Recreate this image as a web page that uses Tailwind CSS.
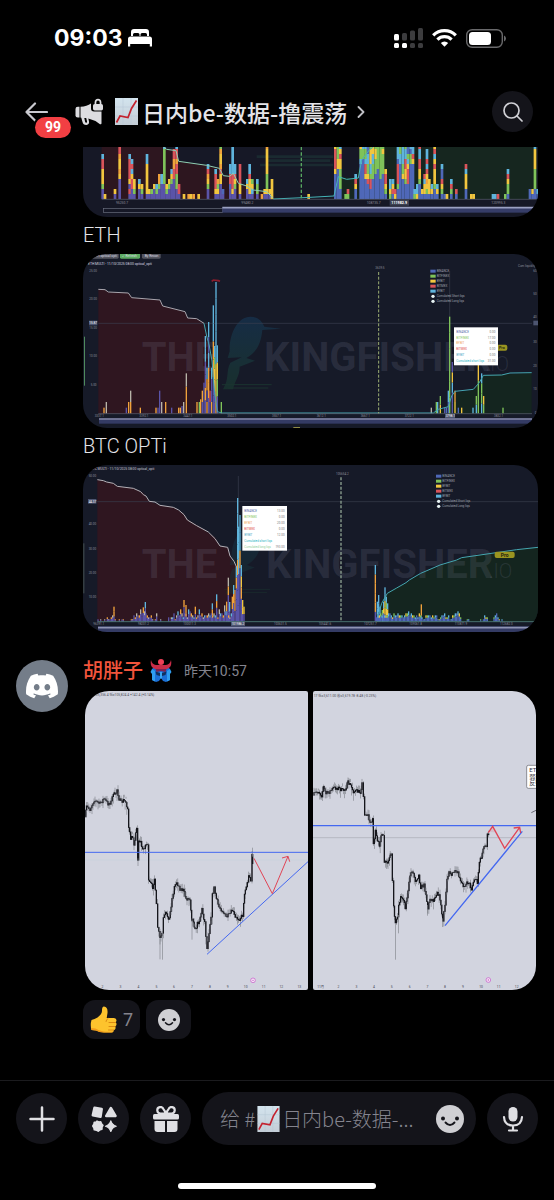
<!DOCTYPE html>
<html lang="zh-CN">
<head>
    <meta charset="UTF-8">
    <meta name="viewport" content="width=device-width, initial-scale=1.0">
    <title>日内be-数据-撸震荡</title>
    <script src="https://cdn.jsdelivr.net/npm/@tailwindcss/browser@4"></script>
</head>
<body class="bg-black text-[#e4e4e8] font-[Roboto,'Noto_Sans_CJK_SC',sans-serif] flex flex-col min-h-screen">
    <!-- Shared symbols -->
    <svg class="absolute w-0 h-0" aria-hidden="true">
        <defs>
            <linearGradient id="paper" x1="0" y1="0" x2="0" y2="1">
                <stop offset="0" stop-color="#d3e4ee"/>
                <stop offset="1" stop-color="#c3cdd6"/>
            </linearGradient>
            <linearGradient id="birdFill" x1="0" y1="0" x2="0" y2="1">
                <stop offset="0" stop-color="#173552"/>
                <stop offset="1" stop-color="#1a3a30"/>
            </linearGradient>
            <symbol id="chartEmoji" viewBox="0 0 23 27">
                <rect width="23" height="27" fill="url(#paper)"/>
                <path d="M0 9h23M0 18h23M8 0v27M16 0v27" stroke="#b4c6d4" stroke-width=".5"/>
                <path d="M1.500 24.500 5 18l8 1.500 3.500-9L21.500 2.500" fill="none" stroke="#c4222e" stroke-width="1.700"/>
            </symbol>
            <symbol id="smile" viewBox="0 0 28 28">
                <circle cx="14" cy="14" r="14" fill="#cfcfd3"/>
                <circle cx="7" cy="13.500" r="2" fill="#14141a"/>
                <circle cx="21" cy="13.500" r="2" fill="#14141a"/>
                <path d="M9.500 17.500q4.500 5 9 0" fill="none" stroke="#14141a" stroke-width="1.900" stroke-linecap="round"/>
            </symbol>
            <symbol id="bird" viewBox="0 0 180 230">
                <path d="M24 106C22 50 50 2 86 2c20 0 34 10 42 30l50 6-56 4c-4 40-16 66-48 84l26 8-46 18c0 30-14 40-20 68H4c20-34 8-54 22-80l34-16-42 2Z" fill="url(#birdFill)"/>
                <path d="M0 206h150M20 216h120" stroke="#1d3f33" stroke-width="3"/>
            </symbol>
        </defs>
    </svg>

    <header class="h-[147px] shrink-0">
        <!-- Status bar -->
        <div class="h-[76px] pl-[54px] pr-12 flex items-center justify-between">
            <div class="flex items-center gap-1.5">
                <span class="text-[23px] leading-7 font-bold text-white font-[Inter,sans-serif]">09:03</span>
                <svg class="w-6 h-[18px]" viewBox="0 0 24 18" fill="#fff">
                    <path d="M3 7V3a3 3 0 0 1 3-3h12a3 3 0 0 1 3 3v4h-2V5.500a1.500 1.500 0 0 0-1.500-1.500H14a1.500 1.500 0 0 0-1.500 1.500V7h-1V5.500A1.500 1.500 0 0 0 10 4H6.500A1.500 1.500 0 0 0 5 5.500V7Z"/>
                    <path d="M2.500 7.500h19A2.500 2.500 0 0 1 24 10v7.500h-2.200V15H2.200v2.500H0V10a2.500 2.500 0 0 1 2.500-2.500Z"/>
                </svg>
            </div>
            <div class="flex items-center gap-[9px]">
                <svg class="w-[29px] h-5" viewBox="0 0 29 20">
                    <g fill="#fff">
                        <rect y="6" width="5" height="6.500" rx="1.500"/>
                        <rect y="15" width="5" height="5" rx="1.500"/>
                        <rect x="8" y="15" width="5" height="5" rx="1.500"/>
                    </g>
                    <g fill="#3c3c3e">
                        <rect x="8" y="5" width="5" height="7.500" rx="1.500"/>
                        <rect x="16" y="2.500" width="5" height="10" rx="1.500"/>
                        <rect x="24" width="5" height="12.500" rx="1.500"/>
                        <rect x="16" y="15" width="5" height="5" rx="1.500"/>
                        <rect x="24" y="15" width="5" height="5" rx="1.500"/>
                    </g>
                </svg>
                <svg class="w-[25px] h-[18px]" viewBox="0 0 25 18" fill="none" stroke="#fff" stroke-width="3.200">
                    <path d="M1.200 6.300a16 16 0 0 1 22.600 0"/>
                    <path d="M5.400 10.600a10 10 0 0 1 14.200 0"/>
                    <path d="M12.500 17.800 8.800 14a5.300 5.300 0 0 1 7.400 0Z" fill="#fff" stroke="none"/>
                </svg>
                <svg class="w-10 h-[19px]" viewBox="0 0 40 19">
                    <rect x=".7" y=".7" width="35.600" height="17.600" rx="5.500" fill="none" stroke="#69696b" stroke-width="1.400"/>
                    <rect x="3" y="3" width="22" height="13" rx="3.500" fill="#fff"/>
                    <path d="M38 6.500q2 .8 2 3t-2 3Z" fill="#69696b"/>
                </svg>
            </div>
        </div>

        <!-- Channel bar -->
        <div class="h-[71px] pl-6 pr-[21px] flex items-center">
            <button class="relative w-6 h-10 flex items-center" aria-label="返回">
                <svg class="w-6 h-5" viewBox="0 0 24 20" fill="none" stroke="#c9c9cf" stroke-width="2.200" stroke-linecap="round" stroke-linejoin="round">
                    <path d="M23 10H2.500M11 1.500 2.500 10l8.500 8.500"/>
                </svg>
                <span class="absolute left-[11px] top-[25px] w-9 h-[21px] rounded-full bg-[#f23f43] ring-2 ring-black text-white text-sm leading-[21px] font-bold text-center">99</span>
            </button>
            <svg class="w-7 h-7 ml-[27px] shrink-0" viewBox="0 0 28 28" fill="#dcdce0">
                <path d="M4.500 8.800v10.800H2.800Q.5 19.600.5 17.500v-6.600q0-2.100 2.300-2.100Z"/>
                <path d="M5.500 8.800Q12 8.600 16 5.500v5q0 3 3 3h7.500v11.800q0 1.500-1.500.9-5.500-4.200-11.700-5.600l.7 3q.6 3-2.500 3.300-3.300.2-4-3L6.300 19.700l-.8-.1Zm3.800 11.200.8 3.700q.3 1.200 1.300 1 .9-.3.6-1.400l-.8-3.200Z" fill-rule="evenodd"/>
                <path d="M19.600 6V4.400q.2-3.600 3.400-3.600t3.400 3.600V6q1.600.3 1.600 1.800v3q0 1.700-1.700 1.700h-6.500q-1.800 0-1.800-1.700v-3q0-1.500 1.600-1.800Zm1.700-.1h3.400V4.400q0-1.900-1.700-1.900t-1.700 1.900Z" fill-rule="evenodd"/>
            </svg>
            <button class="flex items-center ml-3 min-w-0">
                <svg class="w-[23px] h-[27px] shrink-0"><use href="#chartEmoji"/></svg>
                <span class="ml-1 text-[23px] leading-8 font-medium font-['Noto_Sans_CJK_SC',sans-serif] truncate">日内be-数据-撸震荡</span>
                <svg class="w-2 h-3 ml-2.5 shrink-0" viewBox="0 0 8 12" fill="none" stroke="#c0c0c6" stroke-width="1.800" stroke-linecap="round" stroke-linejoin="round">
                    <path d="m1.500 1 5 5-5 5"/>
                </svg>
            </button>
            <button class="w-[41px] h-[41px] ml-auto shrink-0 rounded-full bg-[#14141a] flex items-center justify-center" aria-label="搜索">
                <svg class="w-5 h-5" viewBox="0 0 20 20" fill="none" stroke="#d0d0d5" stroke-width="1.700" stroke-linecap="round">
                    <circle cx="8.500" cy="8.500" r="7.500"/>
                    <path d="m14 14 5 5"/>
                </svg>
            </button>
        </div>
    </header>

    <main class="flex-1 overflow-hidden">
        <article class="pl-[83px] pr-4">
            <svg class="w-full h-auto block rounded-b-3xl bg-[#161826]" viewBox="9 21 1365 211" role="img" aria-label="BTC">
                <path d="M65 21H250L260 28 288 32 296 64 380 76 418 85 430 107 448 109 475 130 500 138 520 150 560 155 580 177H65Z" fill="#2d161f"/>
                <path d="M762 177 775 110 830 115 840 60 850 21H1370V177Z" fill="#16261f"/>
                <path d="M530 50H760M560 62H750M540 75H760" stroke="#1a2a30" stroke-width="8"/>
                <g id="mapBars"></g>
                <path d="M250 21 260 28 288 32 296 64 380 76 418 85 430 107 448 109 460 100 475 130 500 138 520 150 560 155 580 175" fill="none" stroke="#8fd0b4" stroke-width="3"/>
                <path d="M580 177 690 172 762 168 775 110 800 118 835 114 845 60 868 30 880 21" fill="none" stroke="#45b5b8" stroke-width="3"/>
                <path d="M65 178H1370" stroke="#5c6170" stroke-width="2"/>
                <path d="M664 21V178" stroke="#58a760" stroke-width="4" stroke-dasharray="10 6"/>
                <g fill="#8d8f9b" font-size="10">
                    <text x="108" y="191">95250.7</text>
                    <text x="484" y="191">99480.2</text>
                    <text x="860" y="191">108735.7</text>
                    <text x="1234" y="191">120995.3</text>
                </g>
                <rect x="929" y="180" width="58" height="17" fill="#3c4052"/>
                <text x="934" y="192" fill="#fff" font-size="11" font-weight="700">111982.9</text>
                <rect x="70" y="205" width="358" height="12" fill="none" stroke="#6c7080" stroke-width="2"/>
                <rect x="427" y="201" width="943" height="17" fill="#363d68"/>
                <path d="M427 203H1370" stroke="#9ba1c2" stroke-width="5"/>
            </svg>

            <p class="h-[37px] text-xl leading-[36px] font-light">ETH</p>

            <svg class="w-full h-auto block rounded-3xl bg-[#161a28]" viewBox="9 14 1365 522" role="img" aria-label="ETH">
                <path d="M55 120 75 121 85 128 145 131 155 145 240 152 248 170 315 187 323 206 350 208 372 222 380 260 392 330 396 493H55Z" fill="#2f1620"/>
                <path d="M1060 493 1075 480 1105 472 1120 430 1180 422 1198 395 1210 378 1355 371V493Z" fill="#14251f"/>
                <svg x="425" y="200" width="180" height="230" opacity=".7"><use href="#bird"/></svg>
                <g fill="#8c90a8" fill-opacity=".17" font-weight="700" font-size="120">
                    <text x="185" y="366">THE</text>
                    <text x="552" y="366">KINGFISHER</text>
                    <text x="1216" y="366" font-weight="300" font-size="60">.IO</text>
                </g>
                <path d="M55 222H1356M1109 65V493" stroke="#3b3f4e" stroke-width="2"/>
                <g id="ethBars"></g>
                <path d="M55 120 75 121 85 128 145 131 155 145 240 152 248 170 315 187 323 206 350 208 372 222" fill="none" stroke="#a8a5ad" stroke-width="3"/>
                <path d="M372 222 380 260 388 290 396 335 404 430 412 487 425 491H1060L1075 480 1105 472 1115 440 1125 426 1180 420 1198 400 1210 378 1265 377 1290 371 1355 370" fill="none" stroke="#45a6b0" stroke-width="3"/>
                <path d="M395 96 400 92 415 94 420 96" stroke="#8c1d2c" stroke-width="5" fill="none"/>
                <path d="M896 68V493" stroke="#9cae72" stroke-width="3" stroke-dasharray="9 5"/>
                <path d="M55 493H1356" stroke="#5c6170" stroke-width="2"/>
                <rect x="12" y="262" width="3" height="147" fill="#4f8a5c"/>
                <rect x="25" y="12" width="91" height="16" rx="4" fill="#54555f"/>
                <rect x="120" y="12" width="60" height="16" rx="4" fill="#5cab62"/>
                <rect x="186" y="12" width="56" height="16" rx="4" fill="#54555f"/>
                <g fill="#dcdce4" font-size="10">
                    <text x="40" y="24">ETH optical opti</text>
                    <text x="127" y="24">✓ Refresh</text>
                    <text x="194" y="24">By Recon</text>
                    <text x="24" y="47">ETH MULTI - 11/10/2025 08:00 optical_opti</text>
                </g>
                <g fill="#8d8f9b" font-size="9">
                    <text x="28" y="67">25.00</text>
                    <text x="28" y="153">20.00</text>
                    <text x="28" y="240">15.00</text>
                    <text x="28" y="323">10.00</text>
                    <text x="32" y="409">5.00</text>
                    <text x="44" y="502">3337.1</text>
                    <text x="178" y="502">3392.1</text>
                    <text x="310" y="502">3447.1</text>
                    <text x="442" y="502">3502.1</text>
                    <text x="576" y="502">3557.1</text>
                    <text x="710" y="502">3612.1</text>
                    <text x="842" y="502">3667.1</text>
                    <text x="974" y="502">3722.1</text>
                    <text x="1242" y="502">3832.1</text>
                    <text x="886" y="60">3639.5</text>
                    <text x="1366" y="54" text-anchor="end">Cum liquidity</text>
                    <text x="1360" y="67">60</text>
                    <text x="1360" y="138">50</text>
                    <text x="1360" y="207">40</text>
                    <text x="1360" y="281">30</text>
                    <text x="1360" y="352">20</text>
                    <text x="1360" y="423">10</text>
                    <text x="1364" y="495">0</text>
                </g>
                <rect x="27" y="214" width="25" height="14" fill="#4d5570"/>
                <text x="28" y="225" fill="#fff" font-size="9">15.87</text>
                <rect x="1360" y="214" width="14" height="14" fill="#4d5570"/>
                <rect x="1095" y="494" width="30" height="12" fill="#4d5570"/>
                <text x="1097" y="503" fill="#fff" font-size="9">3798.1</text>
                <rect x="57" y="507" width="1299" height="16" fill="#343b64"/>
                <path d="M57 509H1356" stroke="#8489a6" stroke-width="4"/>
                <path d="M640 535h20" stroke="#a8a24c" stroke-width="3"/>
                <g transform="translate(1051 66)" class="legend"></g>
                <rect x="1240" y="286" width="42" height="18" rx="6" fill="#9a9420"/>
                <text x="1257" y="299" fill="#26270f" font-size="11" font-weight="700">Pro</text>
                <rect x="1122" y="234" width="132" height="114" fill="#fff"/>
                <g font-size="9">
                    <text x="1129" y="250" fill="#4f5fa8">BINANCE</text><text x="1246" y="250" text-anchor="end" fill="#777">0.00</text>
                    <text x="1129" y="268" fill="#7fc35a">BITFINEX</text><text x="1246" y="268" text-anchor="end" fill="#777">17.00</text>
                    <text x="1129" y="285" fill="#f0a860">BYBIT</text><text x="1246" y="285" text-anchor="end" fill="#777">0.00</text>
                    <text x="1129" y="303" fill="#e04848">BITMEX</text><text x="1246" y="303" text-anchor="end" fill="#777">0.00</text>
                    <text x="1129" y="321" fill="#49a7c4">BYBIT</text><text x="1246" y="321" text-anchor="end" fill="#777">0.00</text>
                    <text x="1129" y="339" fill="#28b4c4">Cumulated short liqs</text><text x="1246" y="339" text-anchor="end" fill="#777">31.00</text>
                </g>
            </svg>

            <p class="h-[37px] text-xl leading-[36px] font-light">BTC OPTi</p>

            <svg class="w-full h-auto block rounded-3xl bg-[#161a28]" viewBox="9 105 1365 501" role="img" aria-label="BTC OPTi">
                <path d="M52 149 100 160 112 169 160 175 190 188 208 214 240 226 280 232 310 250 322 268 350 285 405 322 420 348 443 352 450 378 470 412 480 574H52Z" fill="#2f1620"/>
                <path d="M890 574 900 520 925 485 975 460 1020 432 1070 410 1130 390 1145 383 1250 367 1374 352V574Z" fill="#14251f"/>
                <svg x="425" y="290" width="180" height="210" opacity=".45"><use href="#bird"/></svg>
                <g fill="#8c90a8" fill-opacity=".17" font-weight="700" font-size="120">
                    <text x="185" y="444">THE</text>
                    <text x="558" y="444">KINGFISHER</text>
                    <text x="1226" y="444" font-weight="300" font-size="60">.IO</text>
                </g>
                <path d="M52 215H1374M475 138V574" stroke="#3b3f4e" stroke-width="2"/>
                <g id="btcBars"></g>
                <path d="M52 149 70 152 80 156 100 160 112 169 160 175 182 185 190 194 198 198 208 214 225 216 240 226 280 232 296 240 312 254 322 270 350 287 385 306 405 326 420 348 443 352 450 378 462 394 470 412" fill="none" stroke="#b5b2b8" stroke-width="3"/>
                <path d="M893 560 905 520 922 490 950 474 978 458 988 450 1022 430 1050 418 1080 405 1130 390 1145 383 1200 375 1255 367 1310 359 1374 352" fill="none" stroke="#45a6b0" stroke-width="3"/>
                <path d="M783 142V574" stroke="#8da291" stroke-width="4" stroke-dasharray="9 5"/>
                <path d="M52 575H1374" stroke="#5f9a90" stroke-width="2"/>
                <rect x="10" y="340" width="3" height="150" fill="#44504f"/>
                <g fill="#8d8f9b" font-size="9">
                    <text x="32" y="121" font-size="10" fill="#c8c8d0">BTC MULTI - 11/10/2025 08:00 optical_opti</text>
                    <text x="26" y="140">50.00</text>
                    <text x="26" y="286">40.00</text>
                    <text x="26" y="359">30.00</text>
                    <text x="26" y="431">20.00</text>
                    <text x="26" y="504">10.00</text>
                    <text x="40" y="584">96391.1</text>
                    <text x="174" y="584">98201.2</text>
                    <text x="310" y="584">100011.3</text>
                    <text x="582" y="584">103631.5</text>
                    <text x="716" y="584">105441.6</text>
                    <text x="852" y="584">107251.7</text>
                    <text x="988" y="584">109061.8</text>
                    <text x="1124" y="584">110871.9</text>
                    <text x="1260" y="584">112682.0</text>
                    <text x="768" y="134">105654.2</text>
                </g>
                <rect x="24" y="207" width="25" height="14" fill="#4d5570"/>
                <text x="26" y="218" fill="#fff" font-size="9">44.37</text>
                <rect x="453" y="576" width="42" height="12" fill="#4d5570"/>
                <text x="455" y="585" fill="#fff" font-size="9">101986.2</text>
                <rect x="54" y="589" width="1299" height="17" fill="#343b64"/>
                <path d="M54 593H1353" stroke="#8f94b4" stroke-width="5"/>
                <g transform="translate(1068 139)" class="legend"></g>
                <rect x="1244" y="365" width="60" height="19" rx="6" fill="#9a9420"/>
                <text x="1262" y="380" fill="#26270f" font-size="15" font-weight="700">Pro</text>
                <rect x="487" y="228" width="134" height="134" fill="#fff"/>
                <g font-size="9">
                    <text x="493" y="245" fill="#4f5fa8">BINANCE</text><text x="614" y="245" text-anchor="end" fill="#777">13.00</text>
                    <text x="493" y="263" fill="#7fc35a">BITFINEX</text><text x="614" y="263" text-anchor="end" fill="#777">0.00</text>
                    <text x="493" y="281" fill="#f0a860">BYBIT</text><text x="614" y="281" text-anchor="end" fill="#777">20.00</text>
                    <text x="493" y="299" fill="#e04848">BITMEX</text><text x="614" y="299" text-anchor="end" fill="#777">0.00</text>
                    <text x="493" y="317" fill="#49a7c4">BYBIT</text><text x="614" y="317" text-anchor="end" fill="#777">12.00</text>
                    <text x="493" y="335" fill="#28b4c4">Cumulated short liqs</text>
                    <text x="493" y="353" fill="#8fcf9a">Cumulated long liqs</text><text x="614" y="353" text-anchor="end" fill="#777">193.00</text>
                </g>
            </svg>
        </article>

        <article class="flex gap-[15px] pl-4 pr-4 mt-6">
            <div class="w-[52px] h-[52px] mt-1 shrink-0 rounded-full bg-[#747d89] flex items-center justify-center">
                <svg class="w-8 h-8" viewBox="0 0 24 24" fill="#fff">
                    <path d="M20.317 4.3698a19.7913 19.7913 0 00-4.8851-1.5152.0741.0741 0 00-.0785.0371c-.211.3753-.4447.8648-.6083 1.2495-1.8447-.2762-3.68-.2762-5.4868 0-.1636-.3933-.4058-.8742-.6177-1.2495a.077.077 0 00-.0785-.037 19.7363 19.7363 0 00-4.8852 1.515.0699.0699 0 00-.0321.0277C.5334 9.0458-.319 13.5799.0992 18.0578a.0824.0824 0 00.0312.0561c2.0528 1.5076 4.0413 2.4228 5.9929 3.0294a.0777.0777 0 00.0842-.0276c.4616-.6304.8731-1.2952 1.226-1.9942a.076.076 0 00-.0416-.1057c-.6528-.2476-1.2743-.5495-1.8722-.8923a.077.077 0 01-.0076-.1277c.1258-.0943.2517-.1923.3718-.2914a.0743.0743 0 01.0776-.0105c3.9278 1.7933 8.18 1.7933 12.0614 0a.0739.0739 0 01.0785.0095c.1202.099.246.1981.3728.2924a.077.077 0 01-.0066.1276 12.2986 12.2986 0 01-1.873.8914.0766.0766 0 00-.0407.1067c.3604.698.7719 1.3628 1.225 1.9932a.076.076 0 00.0842.0286c1.961-.6067 3.9495-1.5219 6.0023-3.0294a.077.077 0 00.0313-.0552c.5004-5.177-.8382-9.6739-3.5485-13.6604a.061.061 0 00-.0312-.0286zM8.02 15.3312c-1.1825 0-2.1569-1.0857-2.1569-2.419 0-1.3332.9555-2.4189 2.157-2.4189 1.2108 0 2.1757 1.0952 2.1568 2.419 0 1.3332-.9555 2.4189-2.1569 2.4189zm7.9748 0c-1.1825 0-2.1569-1.0857-2.1569-2.419 0-1.3332.9554-2.4189 2.1569-2.4189 1.2108 0 2.1757 1.0952 2.1568 2.419 0 1.3332-.946 2.4189-2.1568 2.4189Z"/>
                </svg>
            </div>
            <div class="flex-1 min-w-0">
                <div class="h-[35px] pb-1.5 flex items-center">
                    <span class="text-xl leading-7 font-medium text-[#f2553c]">胡胖子</span>
                    <svg class="w-[22px] h-6 ml-[7px]" viewBox="0 0 22 24">
                        <path d="M2 10 5 7h12l3 3v11l-4 2-3-1-2-3-2 3-3 1-4-2Z" fill="#1b6fd6"/>
                        <path d="M2 10 .5 13 2 15v6l3 1.500V12ZM20 10l1.500 3-1.500 2v6l-3 1.500V12Z" fill="#2f9df0"/>
                        <path d="M1 1q1 4.500 5 5h10q4-.5 5-5 1.500 7-4 9H5Q-.5 8 1 1Z" fill="#c92c48"/>
                        <circle cx="11" cy="3" r="3" fill="#ef4058"/>
                        <path d="M5.500 10h11l-1 3-4.500-1-4.500 1Z" fill="#7b2352"/>
                        <path d="m5.500 12.500 4.500 1.500v3l-3.500-1ZM16.500 12.500 12 14v3l3.500-1Z" fill="#12305e"/>
                        <path d="M10 13h2v6l-1 1-1-1Z" fill="#3aa6f2"/>
                    </svg>
                    <time class="ml-3 text-sm leading-5 text-[#84848e]">昨天10:57</time>
                </div>

                <div class="grid grid-cols-2 gap-[5px] px-0.5">
                    <svg class="w-full h-auto block rounded-l-3xl rounded-r-[2px] bg-[#d2d4df]" viewBox="15 18 669 897" role="img" aria-label="BTC 走势">
                        <text x="42" y="33" fill="#4b4d57" font-size="10">105,356.4 低=105,824.4 +142.4 (+0.14%)</text>
                        <path d="M15 525H684" stroke="#bdd0de" stroke-width="1"/>
                        <g id="btcPrice"></g>
                        <path d="M15 502H684M381 808 684 530" stroke="#4468f0" stroke-width="3"/>
                        <path d="M522 520 577 626 624 514M606 519 624 514 629 530" fill="none" stroke="#e04455" stroke-width="3"/>
                        <circle cx="519" cy="886" r="7" fill="#f5e4f4" stroke="#c453c8" stroke-width="2"/>
                        <circle cx="519" cy="886" r="2" fill="#c453c8"/>
                        <g fill="#43454f" font-size="10" text-anchor="middle">
                            <text x="67" y="909">2</text><text x="121" y="909">3</text><text x="175" y="909">4</text>
                            <text x="229" y="909">5</text><text x="282" y="909">6</text><text x="336" y="909">7</text>
                            <text x="390" y="909">8</text><text x="443" y="909">9</text><text x="497" y="909">10</text>
                            <text x="551" y="909">11</text><text x="604" y="909">12</text><text x="658" y="909">13</text>
                        </g>
                    </svg>
                    <svg class="w-full h-auto block rounded-r-3xl rounded-l-[2px] bg-[#d2d4df]" viewBox="15 18 669 897" role="img" aria-label="ETH 走势">
                        <text x="17" y="36" fill="#4b4d57" font-size="10">17 低=3,611.00 收=3,619.78 -8.48 (-0.23%)</text>
                        <path d="M15 458H684" stroke="#a9abb4" stroke-width="2"/>
                        <g id="ethPrice"></g>
                        <path d="M15 422H684M411 722 643 439" stroke="#4468f0" stroke-width="4"/>
                        <path d="M541 443 554 424 590 490 635 427M617 429 635 427 638 444" fill="none" stroke="#e04455" stroke-width="4"/>
                        <path d="M541 441 554 426 564 442Z" fill="#e04455" fill-opacity=".15"/>
                        <rect x="656" y="241" width="50" height="69" rx="5" fill="#fff" stroke="#5d5f68" stroke-width="2"/>
                        <g fill="#33343c" font-size="18">
                            <text x="664" y="262">ETH</text>
                            <text x="664" y="281">弱势</text>
                            <text x="664" y="300">反弹</text>
                        </g>
                        <path d="M670 383 684 376" stroke="#33343c" stroke-width="2"/>
                        <circle cx="541" cy="885" r="7" fill="#f5e4f4" stroke="#c453c8" stroke-width="2"/>
                        <circle cx="541" cy="885" r="2" fill="#c453c8"/>
                        <g fill="#43454f" font-size="10" text-anchor="middle">
                            <text x="38" y="908">11月</text><text x="91" y="908">2</text><text x="145" y="908">3</text>
                            <text x="198" y="908">4</text><text x="251" y="908">5</text><text x="305" y="908">6</text>
                            <text x="358" y="908">7</text><text x="411" y="908">8</text><text x="465" y="908">9</text>
                            <text x="519" y="908">10</text><text x="572" y="908">11</text><text x="626" y="908">12</text>
                        </g>
                    </svg>
                </div>

                <div class="flex gap-1.5 mt-2.5">
                    <button class="h-[39px] px-[7px] flex items-center gap-1.5 rounded-xl bg-[#14141a] text-lg text-[#84848e]">
                        <svg class="w-[27px] h-[27px]" viewBox="0 0 27 27">
                            <path d="M1.500 14q3-1 6-2.500Q12 8 12 5q-.2-4.500 2-4.500 4 .5 3.500 6.500l-.8 5H24q2.500.3 2.500 2.200 0 1.500-1 2.100 1.200.6 1 2.100-.2 1.600-1.500 2 .8.700.5 2-.4 1.500-1.800 1.600.4 2.500-2.200 2.500H14q-5 0-8-2l-4.500-.5q-1.500-5 0-10Z" fill="#fdc32d"/>
                            <path d="M25.500 16.500H19M25 20.500h-6M23.700 24H18.500M18 12.500q-2 1-2 3" fill="none" stroke="#db8a12" stroke-width="1" stroke-linecap="round"/>
                            <path d="M1.500 24 6 24.500q3 2 8 2h7.500q1.500 0 2-1-6 .5-10 0-5-1-8-3L1.200 22Z" fill="#f19a1a"/>
                        </svg>
                        <span>7</span>
                    </button>
                    <button class="w-[45px] h-[39px] flex items-center justify-center rounded-xl bg-[#14141a]" aria-label="添加反应">
                        <svg class="w-[22px] h-[22px]"><use href="#smile"/></svg>
                    </button>
                </div>
            </div>
        </article>
    </main>

    <footer class="h-[120px] shrink-0 border-t border-[#1b1b1e] flex flex-col items-center justify-between">
        <form class="w-full px-4 pt-[11px] flex items-center gap-[11px]">
            <button type="button" class="w-[51px] h-[51px] shrink-0 rounded-full bg-[#14141a] flex items-center justify-center" aria-label="附件">
                <svg class="w-[26px] h-[26px]" viewBox="0 0 26 26" stroke="#dfdfe3" stroke-width="2.500" stroke-linecap="round">
                    <path d="M13 1.500v23M1.500 13h23"/>
                </svg>
            </button>
            <button type="button" class="w-[51px] h-[51px] shrink-0 rounded-full bg-[#14141a] flex items-center justify-center" aria-label="应用">
                <svg class="w-[26px] h-[26px]" viewBox="0 0 26 26" fill="#dfdfe3" stroke="#dfdfe3" stroke-linejoin="round">
                    <path d="M3.500 1.800 10.700 3 9.500 10.700 1.800 9.300Z" stroke-width="2.500"/>
                    <path d="M19.800 2 24.500 10h-9.300Z" stroke-width="2.500"/>
                    <path d="m6 15.200 1.700.9 2-.1.700 1.900 1.400 1.500-.9 1.700-.1 2-1.900.6-1.700 1.300-1.800-1-2-.3-.4-2-1.100-1.700 1.100-1.700.4-2 2-.2Z" stroke-width="1.800"/>
                    <path d="M19.800 14.800q1.200 4 5.400 5.400-4.200 1.300-5.400 5.300-1.200-4-5.300-5.300 4.100-1.400 5.300-5.400Z" stroke-width="1.200"/>
                </svg>
            </button>
            <button type="button" class="w-[51px] h-[51px] shrink-0 rounded-full bg-[#14141a] flex items-center justify-center" aria-label="礼物">
                <svg class="w-[26px] h-[26px]" viewBox="0 0 26 26" fill="#dfdfe3">
                    <path d="M12.500 7.500H7.500a3.200 3.200 0 1 1 3-4.300Q12.300 5 12.500 7.500ZM13.500 7.500h5a3.200 3.200 0 1 0-3-4.300q-1.800 1.800-2 4.300Z" fill="none" stroke="#dfdfe3" stroke-width="2.200"/>
                    <rect y="8" width="26" height="5.500" rx="1.500"/>
                    <path d="M1.500 15H12v11H4.500a3 3 0 0 1-3-3ZM14 15h10.500v8a3 3 0 0 1-3 3H14Z"/>
                </svg>
            </button>
            <div class="relative h-[53px] flex-1 min-w-0 pl-[18px] pr-3 flex items-center rounded-full bg-[#14141a]">
                <label for="message" class="flex-1 min-w-0 flex items-center text-xl leading-7 font-light font-['Noto_Sans_CJK_SC',sans-serif] text-[#84848e]">
                    <span class="shrink-0">给 #</span>
                    <svg class="w-[23px] h-[26px] mx-0.5 shrink-0"><use href="#chartEmoji"/></svg>
                    <span class="truncate">日内be-数据-...</span>
                </label>
                <input id="message" type="text" class="absolute inset-0 w-full rounded-full pl-[18px] pr-12 bg-transparent outline-none text-xl">
                <button type="button" class="relative ml-1 shrink-0" aria-label="表情">
                    <svg class="w-7 h-7"><use href="#smile"/></svg>
                </button>
            </div>
            <button type="button" class="w-[51px] h-[51px] shrink-0 rounded-full bg-[#14141a] flex items-center justify-center" aria-label="语音">
                <svg class="w-[22px] h-[26px]" viewBox="0 0 22 26" fill="none" stroke="#dfdfe3" stroke-width="2.200" stroke-linecap="round">
                    <rect x="6.500" y="1" width="9" height="14.500" rx="4.500" fill="#dfdfe3" stroke="none"/>
                    <path d="M2 11q.5 8.500 9 8.500t9-8.500M11 19.500V24M7 24.500h8"/>
                </svg>
            </button>
        </form>
        <div class="w-[198px] h-1.5 mb-[11px] rounded-full bg-white"></div>
    </footer>

    <script>
        const colors = { b: '#4f68b8', g: '#7fc35a', y: '#f2c63f', o: '#f0a23c', r: '#d9545a', c: '#5fb4dc', v: '#5a54a8', w: '#b8b4a8' };

        // Stacked bars: one letter per cell, bottom to top
        const stacks = `64:vvgyyyrrc 71:y 101:vy 115:vvvvyoyyorr 145:vrvyrrrrc 152:vvrrycrc 159:vgyy 174:vvyc 182:vgy
            197:vyyyyyycc 204:vy 211:vg 219:vvy 226:vgc 234:vvgoo 241:vvvcc 249:vvvgggggggc 256:vgy 264:vvgy 271:vvvgyc 278:vvvvrroorr
            286:vvgggrrorrc 293:vrr 308:y 322:o 329:y 337:o 352:y 380:vvgyorc 403:vyrrrc 410:vygo 418:vvvyyroyyog 425:vb 447:vvbrrcc
            454:vyrrrccccccc 461:vvgyrcc 476:vyyrrrr 498:vvyc 505:vyyyrcc 513:vcyg 528:vggc 542:o 550:vy 557:vygggyyyyyo 565:vy 572:yyyy 682:y
            762:bbbbbyrrrry 770:bbbbbbyyggg 777:bbggggyyryc 793:g 800:gr 823:bbyrc 838:bbbbbbbcggy 846:bbbbbbbbggc 853:bbbbyrrcggc 860:bbbryggccbb
            868:bbrrgccyyyg 875:bbbbgggccyy 883:bbbbbgggyyg 890:bbbbbbggggg 898:bbbbggggggg 905:bbbbbggggyg 913:bgyrry 927:gycc 935:bryc 942:yr
            950:bbgrrrrbccc 957:bbbbbbbccgg 965:bbbbyggcccc 973:bbbgyyrrccg 980:bbbrrrycgbb 988:bbbbbbbggbc 995:bbbbbbbyrcc 1000:gc 1008:ycc 1015:bbbgyyrrccr
            1023:by 1030:byycr 1037:bgyoyrcrcc 1044:byyy 1052:byc 1060:bbgyyyrycry 1068:byc 1082:bgyrbbc 1090:b 1097:y 1110:bgrc 1125:br
            1154:bbyyycr 1170:y 1177:y 1235:c 1242:c 1250:r 1272:g 1280:bggyrc 1346:bb 1354:by 1361:bbggggyyyyc 1369:bc`;

        function rect(x, y, w, h, fill) {
            return `<rect x="${x}" y="${y}" width="${w}" height="${h}" fill="${fill}"/>`;
        }

        document.getElementById('mapBars').innerHTML = stacks.trim().split(/\s+/).map(item => {
            const [x, cells] = item.split(':');
            return [...cells].map((c, i) => rect(x, 177 - 15 * (i + 1), 8, 15, colors[c])).join('');
        }).join('');

        // Thin bars: x, top, colours from bottom to top
        const ethBars = [
            [72, 475, 'o'], [79, 458, 'w'], [139, 475, 'v'], [146, 458, 'o'], [152, 424, 'ow'], [181, 475, 'o'], [228, 475, 'o'], [234, 475, 'v'],
            [239, 424, 'vv'], [245, 458, 'w'], [257, 458, 'o'], [275, 475, 'v'], [296, 475, 'o'], [301, 475, 'o'], [306, 470, 'v'], [311, 458, 'w'],
            [319, 372, 'oow'], [351, 458, 'o'], [358, 458, 'g'], [362, 450, 'o'], [367, 424, 'vo'], [372, 400, 'vv'], [376, 260, 'vovvcc'], [381, 355, 'ovoc'],
            [386, 218, 'voocvc'], [390, 424, 'vr'], [395, 355, 'ovvc'], [400, 168, 'vvoocc'], [404, 290, 'vvyygc'], [408, 98, 'oyyccccc'], [412, 288, 'vgyc'], [424, 458, 'g'],
            [1054, 475, 'w'], [1069, 458, 'g'], [1073, 458, 'c'], [1081, 440, 'yg'], [1094, 475, 'v'], [1099, 475, 'b'], [1105, 424, 'bc'], [1109, 202, 'gggggg'],
            [1117, 338, 'vvcyv'], [1125, 424, 'yo'], [1135, 475, 'b'], [1145, 475, 'y'], [1179, 475, 'c'], [1189, 440, 'cg'], [1195, 345, 'ggy'],
            [1205, 372, 'cggc'], [1211, 440, 'gy'], [1269, 475, 'g']
        ];
        const btcBars = [
            [102, 530, 'voo'], [196, 516, 'vvc'], [312, 510, 'vvo'], [318, 525, 'vo'], [346, 530, 'vo'], [397, 520, 'voc'], [410, 493, 'vvoc'], [440, 515, 'vo'],
            [445, 443, 'vvvow'], [449, 516, 'vc'], [457, 500, 'vo'], [461, 465, 'vvoc'], [465, 480, 'voo'], [469, 410, 'vvvoc'], [473, 204, 'vvvocccc'],
            [476, 290, 'vvvccc'], [480, 255, 'vvvocc'], [484, 405, 'vvoyc'], [488, 510, 'vyy'], [492, 530, 'vy'], [886, 405, 'vooooc'], [892, 515, 'bcc'],
            [896, 495, 'bcc'], [900, 530, 'bc'], [907, 540, 'cg'], [911, 515, 'byc'], [915, 472, 'byycc'], [919, 500, 'bygc'], [923, 520, 'byc'], [1024, 523, 'boo']
        ];

        function drawBars(id, bars, base) {
            document.getElementById(id).innerHTML = bars.map(([x, top, cells]) => {
                const h = (base - top) / cells.length;
                return [...cells].map((c, i) => rect(x - 2, base - h * (i + 1), 4, h, colors[c])).join('');
            }).join('');
        }

        // Low noise bars, one digit per 4 units
        function drawNoise(id, start, digits, palette, base) {
            document.getElementById(id).innerHTML += [...digits].map((d, i) => {
                const h = d * 6, x = start + i * 4;
                return rect(x, base - h * .6, 4, h * .6, colors[palette[0]]) + rect(x, base - h, 4, h * .4, colors[palette[i % palette.length]]);
            }).join('');
        }

        drawBars('ethBars', ethBars, 492);
        drawBars('btcBars', btcBars, 574);
        drawNoise('btcBars', 52, '1010010211230100101100000113243364754322310140010', 'vow', 574);
        drawNoise('btcBars', 264, '202241353642442654321236342333434343526443855324', 'vowc', 574);
        drawNoise('btcBars', 888, '2334343334432433433323445343323243211333323233112334223113344542000011000000001013220000234210100', 'bcygc', 574);

        // Legends
        const legend = [['b', 'BINANCE'], ['g', 'BITFINEX'], ['y', 'BYBIT'], ['r', 'BITMEX'], ['c', 'BYBIT'], [null, 'Cumulated Short liqs'], [null, 'Cumulated Long liqs']];
        document.querySelectorAll('.legend').forEach(g => {
            g.innerHTML = legend.map(([c, name], i) => {
                const y = i * 15;
                const mark = c ? rect(0, y - 5, 16, 9, colors[c]) : `<circle cx="8" cy="${y}" r="5" fill="#e8f4f4"/>`;
                return `${mark}<text x="19" y="${y + 3}" font-size="9" fill="#9fa1ad">${name}</text>`;
            }).join('');
        });

        // Price candles along a list of turning points
        function drawPrice(id, points, wicks) {
            let seed = 7, out = '', last = points[0][1];
            const rand = () => (seed = (seed * 16807) % 2147483647) / 2147483647;
            for (let i = 1; i < points.length; i++) {
                const [x0, y0] = points[i - 1], [x1, y1] = points[i];
                const n = Math.max(1, Math.round((x1 - x0) / 3));
                for (let k = 1; k <= n; k++) {
                    const x = x0 + (x1 - x0) * k / n;
                    const y = y0 + (y1 - y0) * k / n + (rand() - .5) * 12;
                    const top = Math.min(last, y), h = Math.abs(y - last) + 2;
                    out += rect(x - 1, top - rand() * 14, 2, h + rand() * 26, '#85878f');
                    out += rect(x - 2, top, 4, h, '#15161c');
                    last = y;
                }
            }
            wicks.forEach(([x, a, b]) => out += rect(x - 1, a, 2, b - a, '#85878f'));
            document.getElementById(id).innerHTML = out;
        }

        drawPrice('btcPrice', [
            [15, 395], [20, 365], [30, 372], [42, 345], [60, 355], [72, 340], [84, 355], [93, 350], [100, 322], [105, 332], [111, 312], [117, 340], [123, 352],
            [130, 345], [138, 350], [143, 370], [146, 430], [152, 460], [158, 455], [162, 475], [170, 430], [173, 520], [176, 465], [182, 470], [188, 495], [196, 480],
            [202, 475], [206, 590], [212, 595], [218, 605], [223, 580], [229, 660], [233, 725], [240, 760], [246, 745], [250, 700], [257, 685], [268, 700],
            [276, 640], [283, 605], [290, 590], [300, 610], [310, 615], [318, 640], [330, 640], [335, 700], [340, 705], [345, 735], [352, 715], [358, 705],
            [366, 672], [374, 710], [381, 790], [387, 740], [393, 690], [397, 630], [402, 608], [409, 640], [417, 665], [427, 675], [438, 695], [447, 690], [457, 675],
            [466, 698], [478, 700], [487, 690], [491, 650], [496, 610], [502, 590], [506, 570], [512, 585], [516, 510], [518, 530]
        ], [[240, 760, 823], [248, 740, 824], [336, 700, 764], [517, 488, 515], [174, 520, 543]]);

        drawPrice('ethPrice', [
            [15, 330], [24, 322], [32, 318], [40, 330], [46, 305], [54, 325], [66, 318], [76, 308], [92, 308], [104, 316], [112, 310], [120, 292], [128, 300],
            [136, 318], [146, 318], [157, 320], [162, 295], [166, 335], [170, 385], [180, 390], [186, 415], [194, 400], [196, 475], [202, 440], [208, 470], [214, 478],
            [219, 450], [225, 455], [229, 530], [238, 535], [244, 520], [249, 510], [253, 590], [257, 660], [262, 715], [268, 690], [272, 660], [278, 635],
            [286, 640], [292, 665], [300, 620], [306, 570], [312, 555], [322, 585], [332, 570], [338, 605], [348, 600], [354, 625], [359, 670], [366, 640],
            [376, 645], [388, 618], [396, 640], [404, 708], [411, 660], [417, 580], [423, 555], [430, 570], [438, 560], [450, 565], [458, 590], [466, 602],
            [474, 595], [482, 590], [490, 610], [496, 590], [502, 580], [508, 590], [514, 530], [520, 515], [528, 485], [534, 480], [538, 450], [542, 452]
        ], [[262, 715, 824], [271, 690, 745], [359, 660, 692], [404, 700, 726], [240, 535, 552]]);
    </script>
</body>
</html>
